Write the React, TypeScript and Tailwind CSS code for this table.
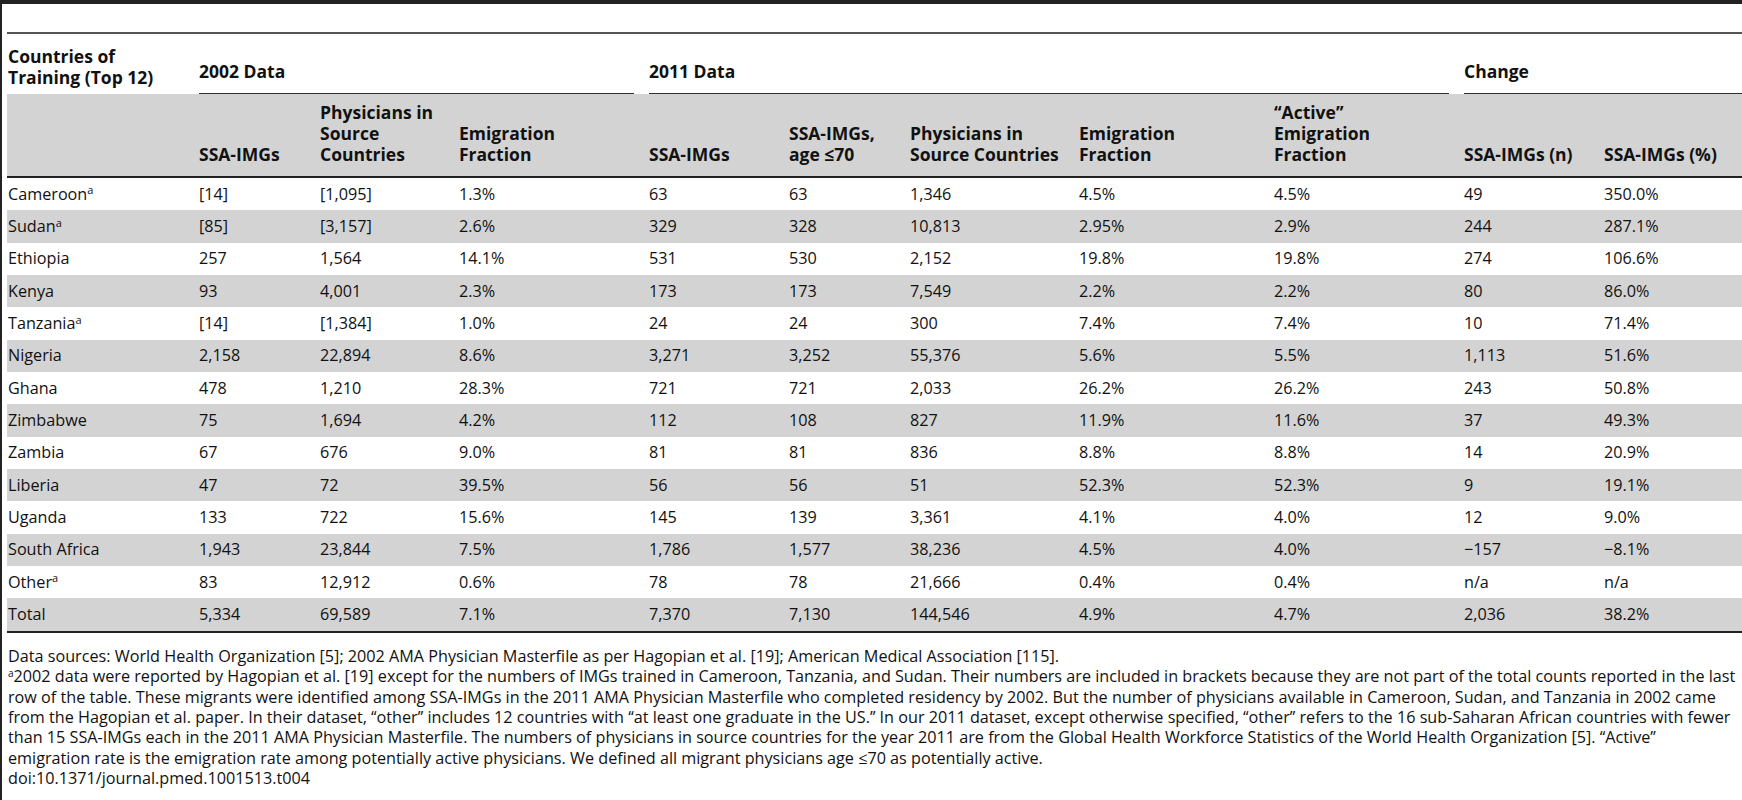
import React from 'react';

const colW = [
  'w-[192px] pl-[1px]',
  'w-[121px]',
  'w-[139px]',
  'w-[190px]',
  'w-[140px]',
  'w-[121px]',
  'w-[169px]',
  'w-[195px]',
  'w-[190px]',
  'w-[140px]',
  'w-[138px]',
];

const subHeads: React.ReactNode[] = [
  '',
  'SSA-IMGs',
  <>Physicians in<br />Source<br />Countries</>,
  <>Emigration<br />Fraction</>,
  'SSA-IMGs',
  <>SSA-IMGs,<br />age ≤70</>,
  <>Physicians in<br />Source Countries</>,
  <>Emigration<br />Fraction</>,
  <>‘‘Active’’<br />Emigration<br />Fraction</>,
  'SSA-IMGs (n)',
  'SSA-IMGs (%)',
];

const rows: { name: string; note?: boolean; vals: string[] }[] = [
  { name: 'Cameroon', note: true, vals: ['[14]', '[1,095]', '1.3%', '63', '63', '1,346', '4.5%', '4.5%', '49', '350.0%'] },
  { name: 'Sudan', note: true, vals: ['[85]', '[3,157]', '2.6%', '329', '328', '10,813', '2.95%', '2.9%', '244', '287.1%'] },
  { name: 'Ethiopia', vals: ['257', '1,564', '14.1%', '531', '530', '2,152', '19.8%', '19.8%', '274', '106.6%'] },
  { name: 'Kenya', vals: ['93', '4,001', '2.3%', '173', '173', '7,549', '2.2%', '2.2%', '80', '86.0%'] },
  { name: 'Tanzania', note: true, vals: ['[14]', '[1,384]', '1.0%', '24', '24', '300', '7.4%', '7.4%', '10', '71.4%'] },
  { name: 'Nigeria', vals: ['2,158', '22,894', '8.6%', '3,271', '3,252', '55,376', '5.6%', '5.5%', '1,113', '51.6%'] },
  { name: 'Ghana', vals: ['478', '1,210', '28.3%', '721', '721', '2,033', '26.2%', '26.2%', '243', '50.8%'] },
  { name: 'Zimbabwe', vals: ['75', '1,694', '4.2%', '112', '108', '827', '11.9%', '11.6%', '37', '49.3%'] },
  { name: 'Zambia', vals: ['67', '676', '9.0%', '81', '81', '836', '8.8%', '8.8%', '14', '20.9%'] },
  { name: 'Liberia', vals: ['47', '72', '39.5%', '56', '56', '51', '52.3%', '52.3%', '9', '19.1%'] },
  { name: 'Uganda', vals: ['133', '722', '15.6%', '145', '139', '3,361', '4.1%', '4.0%', '12', '9.0%'] },
  { name: 'South Africa', vals: ['1,943', '23,844', '7.5%', '1,786', '1,577', '38,236', '4.5%', '4.0%', '−157', '−8.1%'] },
  { name: 'Other', note: true, vals: ['83', '12,912', '0.6%', '78', '78', '21,666', '0.4%', '0.4%', 'n/a', 'n/a'] },
  { name: 'Total', vals: ['5,334', '69,589', '7.1%', '7,370', '7,130', '144,546', '4.9%', '4.7%', '2,036', '38.2%'] },
];

const notes: React.ReactNode[] = [
  'Data sources: World Health Organization [5]; 2002 AMA Physician Masterfile as per Hagopian et al. [19]; American Medical Association [115].',
  <><sup className="text-[10px]">a</sup>2002 data were reported by Hagopian et al. [19] except for the numbers of IMGs trained in Cameroon, Tanzania, and Sudan. Their numbers are included in brackets because they are not part of the total counts reported in the last</>,
  'row of the table. These migrants were identified among SSA-IMGs in the 2011 AMA Physician Masterfile who completed residency by 2002. But the number of physicians available in Cameroon, Sudan, and Tanzania in 2002 came',
  'from the Hagopian et al. paper. In their dataset, ‘‘other’’ includes 12 countries with ‘‘at least one graduate in the US.’’ In our 2011 dataset, except otherwise specified, ‘‘other’’ refers to the 16 sub-Saharan African countries with fewer',
  'than 15 SSA-IMGs each in the 2011 AMA Physician Masterfile. The numbers of physicians in source countries for the year 2011 are from the Global Health Workforce Statistics of the World Health Organization [5]. ‘‘Active’’',
  'emigration rate is the emigration rate among potentially active physicians. We defined all migrant physicians age ≤70 as potentially active.',
  'doi:10.1371/journal.pmed.1001513.t004',
];

const App: React.FC = () => {
  return (
    <div className="flex h-[800px] w-[1742px] flex-col overflow-hidden bg-white font-['Open_Sans',sans-serif] text-[16.2px] text-[#111]">
      <div className="h-[4px] bg-[#222]" />
      <div className="flex flex-1">
        <div className="w-[2px] bg-[#222]" />
        <div className="flex-1 pl-[5px]">
          <div className="mt-[28px] border-t-2 border-[#555]" />

          {/* group header */}
          <div className="flex h-[60px] text-[17.5px] font-bold leading-[21px]">
            <div className={`${colW[0]} pt-[12px]`}>Countries of<br />Training (Top 12)</div>
            <div className="w-[450px] pr-[15px]">
              <div className="h-full border-b-[1.5px] border-[#333] pt-[27px]">2002 Data</div>
            </div>
            <div className="w-[815px] pr-[15px]">
              <div className="h-full border-b-[1.5px] border-[#333] pt-[27px]">2011 Data</div>
            </div>
            <div className="w-[278px]">
              <div className="h-full border-b-[1.5px] border-[#333] pt-[27px]">Change</div>
            </div>
          </div>

          {/* column header */}
          <div className="flex h-[84px] items-end border-b-2 border-[#222] bg-[#d3d3d3] pb-[11px] text-[17.5px] font-bold leading-[21px]">
            {subHeads.map((h, i) => (
              <div key={i} className={colW[i]}>{h}</div>
            ))}
          </div>

          {/* body */}
          {rows.map((r, ri) => (
            <div
              key={r.name}
              className={`flex items-center leading-[21px] ${ri % 2 === 1 || r.name === 'Total' ? 'bg-[#d3d3d3]' : ''} ${r.name === 'Total' ? 'h-[34.4px] border-b-2 border-[#222]' : 'h-[32.35px]'}`}
            >
              <div className={colW[0]}>
                {r.name}
                {r.note && <sup className="text-[11px]">a</sup>}
              </div>
              {r.vals.map((v, vi) => (
                <div key={vi} className={colW[vi + 1]}>{v}</div>
              ))}
            </div>
          ))}

          {/* footnotes */}
          <div className="mt-[13px] pl-[1px] leading-[20.4px]">
            {notes.map((n, i) => (
              <div key={i} className="whitespace-nowrap">{n}</div>
            ))}
          </div>
        </div>
      </div>
    </div>
  );
};

export default App;
